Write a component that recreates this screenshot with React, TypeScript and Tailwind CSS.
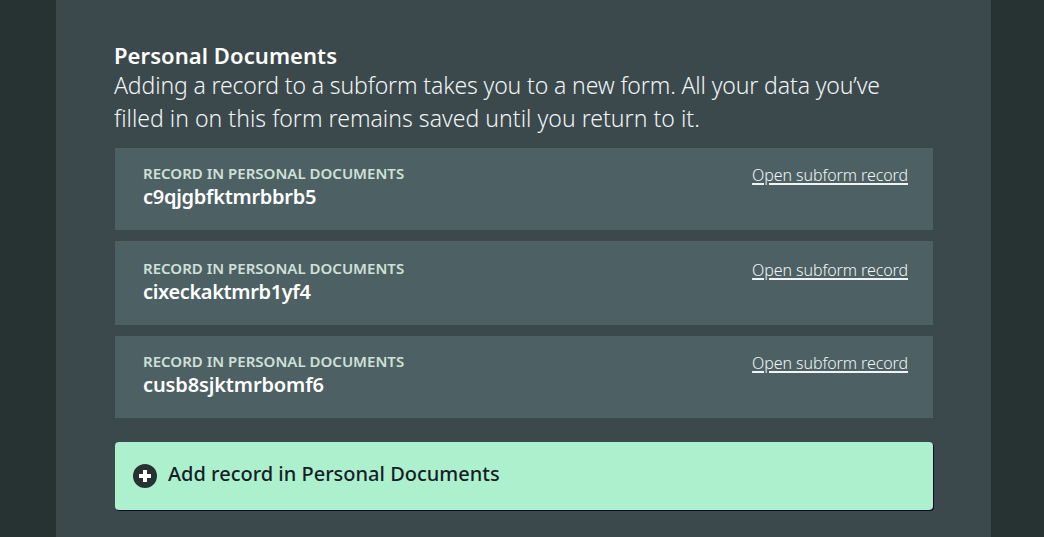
import React from "react";
import clsx from "clsx";

type SubformRecord = {
  id: string;
  className: string;
  idClassName: string;
};

const records: SubformRecord[] = [
  {
    id: "c9qjgbfktmrbbrb5",
    className: "h-[82px] pt-[15px]",
    idClassName: "tracking-[-0.28px]",
  },
  {
    id: "cixeckaktmrb1yf4",
    className: "h-[84px] pt-[17px]",
    idClassName: "tracking-[-0.36px]",
  },
  {
    id: "cusb8sjktmrbomf6",
    className: "h-[82px] pt-[15px]",
    idClassName: "tracking-[-0.13px]",
  },
];

function RecordCard({ id, className, idClassName }: SubformRecord) {
  return (
    <li
      className={clsx(
        "flex items-start justify-between bg-[#4d6164] pr-[25px] pl-7 whitespace-nowrap",
        className
      )}
    >
      <div>
        <div className="text-[15px] leading-5 font-semibold tracking-[0.01px] text-[#d0e0d8] uppercase">
          Record in Personal Documents
        </div>
        <div
          className={clsx(
            "text-[20px] leading-7 font-semibold text-white",
            idClassName
          )}
        >
          {id}
        </div>
      </div>
      <a
        href="#"
        className="text-[16px] leading-6 font-light tracking-[-0.09px] text-[#f0f4f4] underline decoration-[1.5px] underline-offset-2"
      >
        Open subform record
      </a>
    </li>
  );
}

function PlusIcon() {
  return (
    <svg viewBox="0 0 24 24" className="h-6 w-6 shrink-0" aria-hidden="true">
      <circle cx="12" cy="12" r="12" fill="#273232" />
      <path d="M10 6h4v4h4v4h-4v4h-4v-4h-4v-4h4z" fill="#fff" />
    </svg>
  );
}

export default function App() {
  return (
    <div className="h-[537px] overflow-hidden bg-[#273232] pr-[53px] pl-14 font-['Noto_Sans',sans-serif]">
      <main className="h-full bg-[#3b494c] pt-[41px] pr-[58px] pl-[59px]">
        <h2 className="-ml-px text-[22px] leading-7 font-semibold tracking-[0.07px] whitespace-nowrap text-white">
          Personal Documents
        </h2>
        <p className="-ml-px text-[23px] leading-[33px] font-light whitespace-nowrap text-[#f0f4f4]">
          <span className="tracking-[-0.13px]">
            Adding a record to a subform takes you to a new form. All your data
            you’ve
          </span>
          <br />
          <span className="tracking-[0.03px]">
            filled in on this form remains saved until you return to it.
          </span>
        </p>
        <ul className="mt-[13px] flex flex-col gap-[11px]">
          {records.map((r) => (
            <RecordCard key={r.id} {...r} />
          ))}
        </ul>
        <button
          type="button"
          className="mt-6 flex h-[68px] w-full items-center gap-[11px] rounded-[4px] bg-[#acf0ce] pl-[18px] text-[20px] font-medium text-[#161e26] shadow-[1px_1px_0_#0c0a28]"
        >
          <PlusIcon />
          <span className="-mt-[5px]">Add record in Personal Documents</span>
        </button>
      </main>
    </div>
  );
}
